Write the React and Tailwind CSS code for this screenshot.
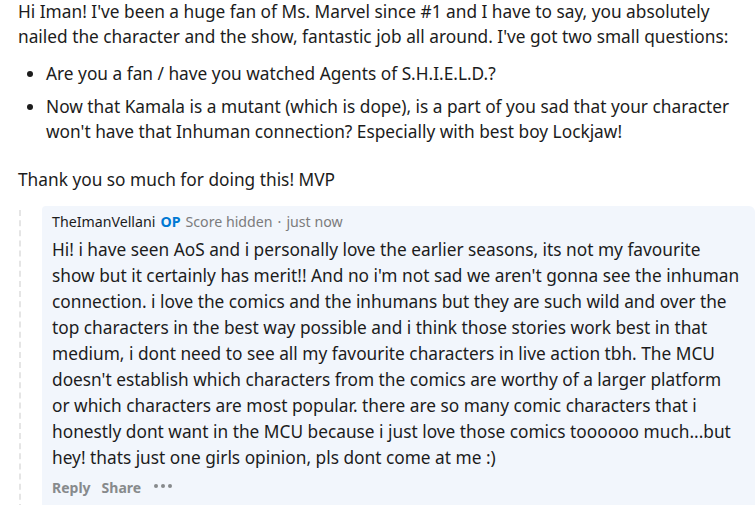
import React from "react";

const font = { fontFamily: '"Noto Sans", "Open Sans", sans-serif' };

const Lines = ({ lines }) => (
  <>
    {lines.map((l, i) => (
      <span key={i} className="block whitespace-nowrap">
        {l}
      </span>
    ))}
  </>
);

const reply = [
  "Hi! i have seen AoS and i personally love the earlier seasons, its not my favourite",
  "show but it certainly has merit!! And no i'm not sad we aren't gonna see the inhuman",
  "connection. i love the comics and the inhumans but they are such wild and over the",
  "top characters in the best way possible and i think those stories work best in that",
  "medium, i dont need to see all my favourite characters in live action tbh. The MCU",
  "doesn't establish which characters from the comics are worthy of a larger platform",
  "or which characters are most popular. there are so many comic characters that i",
  "honestly dont want in the MCU because i just love those comics toooooo much...but",
  "hey! thats just one girls opinion, pls dont come at me :)",
];

const App = () => {
  return (
    <div className="w-[755px] h-[505px] overflow-hidden bg-white text-[#1c1c1c]" style={font}>
      <div className="pl-[18px] pr-[10px] text-[17.3px] leading-[25px] -mt-[1px]">
        <p>
          <Lines
            lines={[
              "Hi Iman! I've been a huge fan of Ms. Marvel since #1 and I have to say, you absolutely",
              "nailed the character and the show, fantastic job all around. I've got two small questions:",
            ]}
          />
        </p>
        <ul className="mt-[12px] pl-[28px] list-disc">
          <li>Are you a fan / have you watched Agents of S.H.I.E.L.D.?</li>
          <li className="mt-[8px]">
            <Lines
              lines={[
                "Now that Kamala is a mutant (which is dope), is a part of you sad that your character",
                "won't have that Inhuman connection? Especially with best boy Lockjaw!",
              ]}
            />
          </li>
        </ul>
        <p className="mt-[23px]">Thank you so much for doing this! MVP</p>
      </div>

      {/* reply thread */}
      <div className="flex mt-[14px]">
        <div className="w-[42px] shrink-0 flex justify-center">
          <div className="mt-[4px] h-[300px] border-l-2 border-dashed border-[#e5e5e5] -ml-[3px]"></div>
        </div>
        <div className="flex-1 bg-[#f2f6fc] rounded-tr-[6px] rounded-tl-[4px] pl-[10px] pr-[11px] pt-[7px]">
          <div className="flex items-center text-[14.2px] leading-[18px]">
            <span className="text-[#1c1c1c]">TheImanVellani</span>
            <span className="ml-[5px] font-bold text-[#0079d3]">OP</span>
            <span className="ml-[5px] text-[#7c7c7c]">Score hidden</span>
            <span className="mx-[5px] text-[#7c7c7c]">·</span>
            <span className="text-[#7c7c7c]">just now</span>
          </div>
          <p className="mt-[6px] text-[17.3px] leading-[26px]">
            <Lines lines={reply} />
          </p>
          <div className="flex items-center mt-[7px] text-[14px] leading-[20px] font-bold text-[#878a8c]">
            <span>Reply</span>
            <span className="ml-[11px]">Share</span>
            <span className="ml-[13px] -mt-[5px] flex gap-[3px]">
              <span className="w-[4px] h-[4px] rounded-full bg-[#878a8c]"></span>
              <span className="w-[4px] h-[4px] rounded-full bg-[#878a8c]"></span>
              <span className="w-[4px] h-[4px] rounded-full bg-[#878a8c]"></span>
            </span>
          </div>
        </div>
      </div>
    </div>
  );
};

export default App;
